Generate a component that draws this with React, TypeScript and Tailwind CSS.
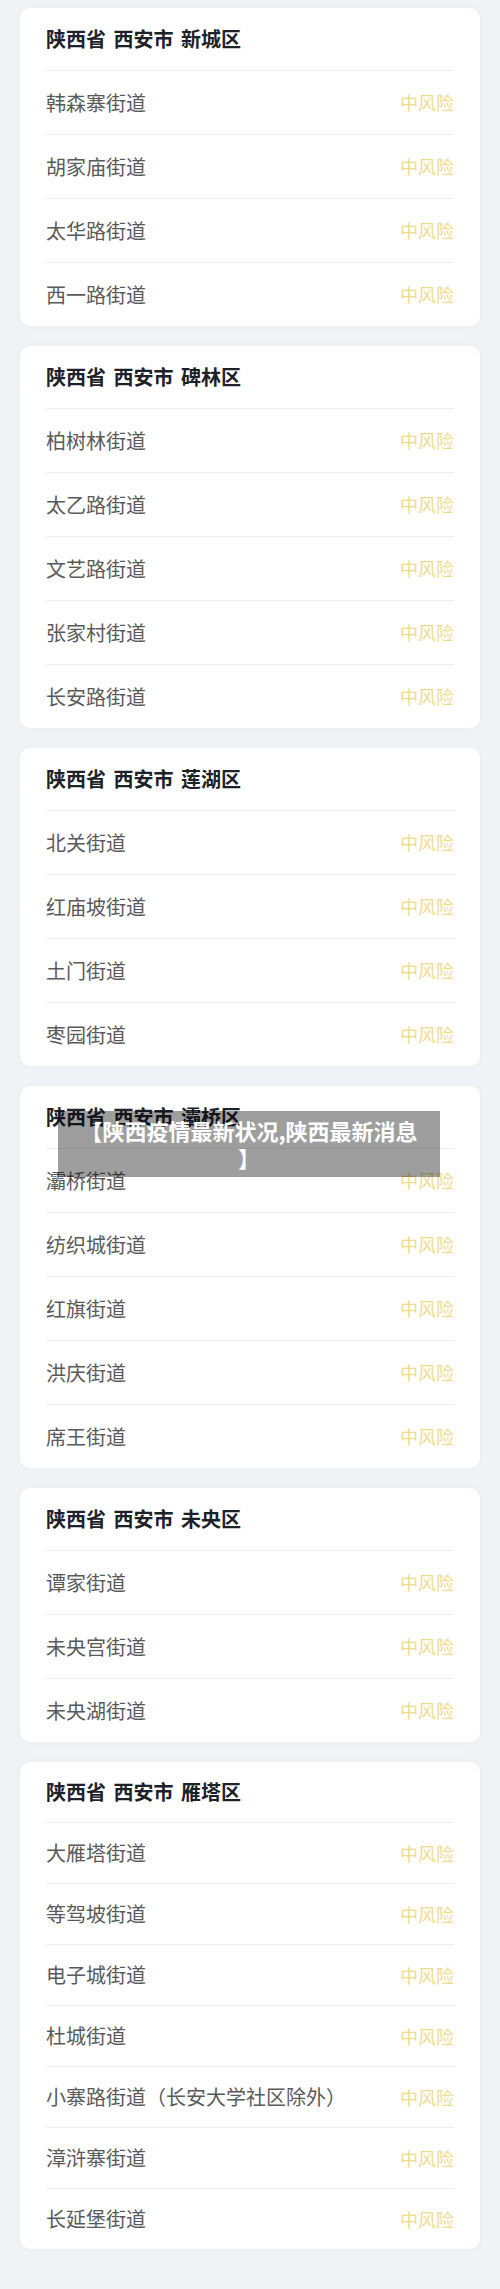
import React from "react";

type District = {
    title: string;
    streets: string[];
    compact?: boolean;
};

const districts: District[] = [
    { title: "陕西省 西安市 新城区", streets: ["韩森寨街道", "胡家庙街道", "太华路街道", "西一路街道"] },
    { title: "陕西省 西安市 碑林区", streets: ["柏树林街道", "太乙路街道", "文艺路街道", "张家村街道", "长安路街道"] },
    { title: "陕西省 西安市 莲湖区", streets: ["北关街道", "红庙坡街道", "土门街道", "枣园街道"] },
    { title: "陕西省 西安市 灞桥区", streets: ["灞桥街道", "纺织城街道", "红旗街道", "洪庆街道", "席王街道"] },
    { title: "陕西省 西安市 未央区", streets: ["谭家街道", "未央宫街道", "未央湖街道"] },
    {
        title: "陕西省 西安市 雁塔区",
        streets: [
            "大雁塔街道",
            "等驾坡街道",
            "电子城街道",
            "杜城街道",
            "小寨路街道（长安大学社区除外）",
            "漳浒寨街道",
            "长延堡街道",
        ],
        compact: true,
    },
];

function DistrictCard({ title, streets, compact }: District) {
    return (
        <section className="mx-[20px] rounded-[10px] bg-white px-[26px] shadow-[0_0_6px_rgba(0,0,0,0.03)]">
            <div
                className={
                    (compact ? "h-[60px]" : "h-[62px]") +
                    " flex items-center text-[20px] font-bold text-[#1d2129] [word-spacing:3px]"
                }
            >
                {title}
            </div>
            {streets.map((s) => (
                <div
                    key={s}
                    className={
                        (compact ? "h-[61px]" : "h-[64px]") +
                        " flex items-center justify-between border-t border-[#eeeeee]"
                    }
                >
                    <span className="text-[20px] text-[#5a5a5a]">{s}</span>
                    <span className="text-[18px] text-[#f0db8c]">中风险</span>
                </div>
            ))}
        </section>
    );
}

export default function App() {
    return (
        <div
            className="relative min-h-[2289px] w-[500px] bg-[#f0f3f6] pt-[8px] pb-[38px]"
            style={{ fontFamily: '"Noto Sans CJK SC", "Noto Sans", sans-serif' }}
        >
            <div className="flex flex-col gap-[20px]">
                {districts.map((d) => (
                    <DistrictCard key={d.title} {...d} />
                ))}
            </div>

            {/* title banner over the list */}
            <div className="absolute left-[58px] top-[1111px] w-[382px] bg-[rgba(0,0,0,0.38)] px-[20px] py-[6px] text-center text-[22px] leading-[27px] font-bold text-white [line-break:anywhere]">
                【陕西疫情最新状况,陕西最新消息】
            </div>
        </div>
    );
}
